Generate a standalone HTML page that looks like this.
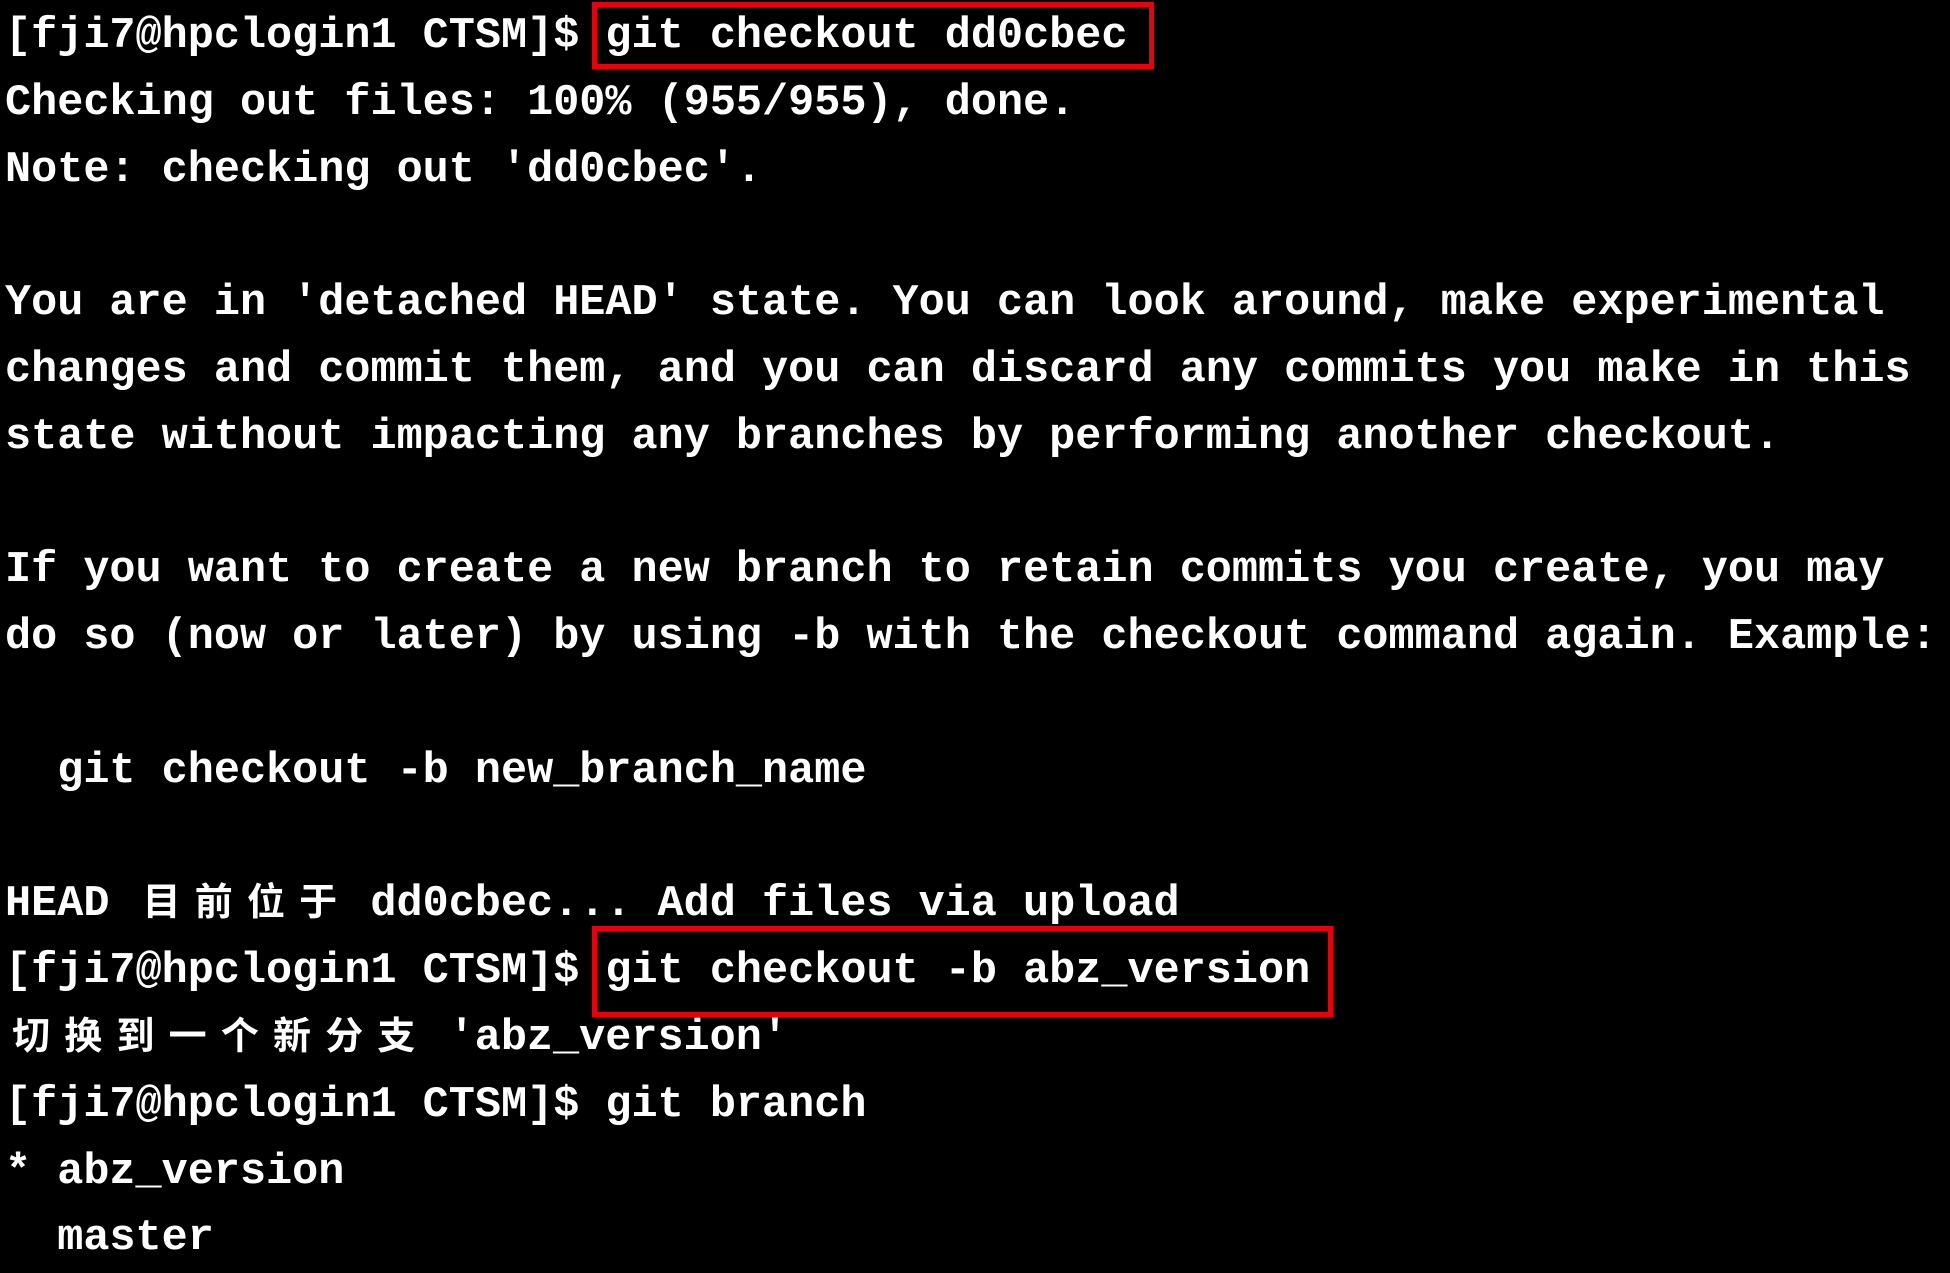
<!DOCTYPE html>
<html><head><meta charset="utf-8"><style>
html,body{margin:0;padding:0;background:#000;width:1950px;height:1268px;overflow:hidden}
.t{position:absolute;left:5px;top:4px;font-family:"Liberation Mono","Noto Sans CJK SC",monospace;font-weight:bold;font-size:43.5px;line-height:66.8px;color:#fff}
.l{height:66.8px;white-space:pre}
.c{display:inline-block;width:52.2px;text-align:center;font-family:"Noto Sans CJK SC",sans-serif;font-size:38px;line-height:0}
.box{position:absolute;border:5px solid #e8000b;box-sizing:border-box}
</style></head><body>
<div class="t"><div class="l">[fji7@hpclogin1 CTSM]$ git checkout dd0cbec</div><div class="l">Checking out files: 100% (955/955), done.</div><div class="l">Note: checking out 'dd0cbec'.</div><div class="l"></div><div class="l">You are in 'detached HEAD' state. You can look around, make experimental</div><div class="l">changes and commit them, and you can discard any commits you make in this</div><div class="l">state without impacting any branches by performing another checkout.</div><div class="l"></div><div class="l">If you want to create a new branch to retain commits you create, you may</div><div class="l">do so (now or later) by using -b with the checkout command again. Example:</div><div class="l"></div><div class="l">  git checkout -b new_branch_name</div><div class="l"></div><div class="l">HEAD <span class="c">目</span><span class="c">前</span><span class="c">位</span><span class="c">于</span> dd0cbec... Add files via upload</div><div class="l">[fji7@hpclogin1 CTSM]$ git checkout -b abz_version</div><div class="l"><span class="c">切</span><span class="c">换</span><span class="c">到</span><span class="c">一</span><span class="c">个</span><span class="c">新</span><span class="c">分</span><span class="c">支</span> 'abz_version'</div><div class="l">[fji7@hpclogin1 CTSM]$ git branch</div><div class="l">* abz_version</div><div class="l">  master</div></div>
<div class="box" style="left:592px;top:2px;width:562px;height:67px"></div>
<div class="box" style="left:592px;top:926px;width:741px;height:91px"></div>
</body></html>
